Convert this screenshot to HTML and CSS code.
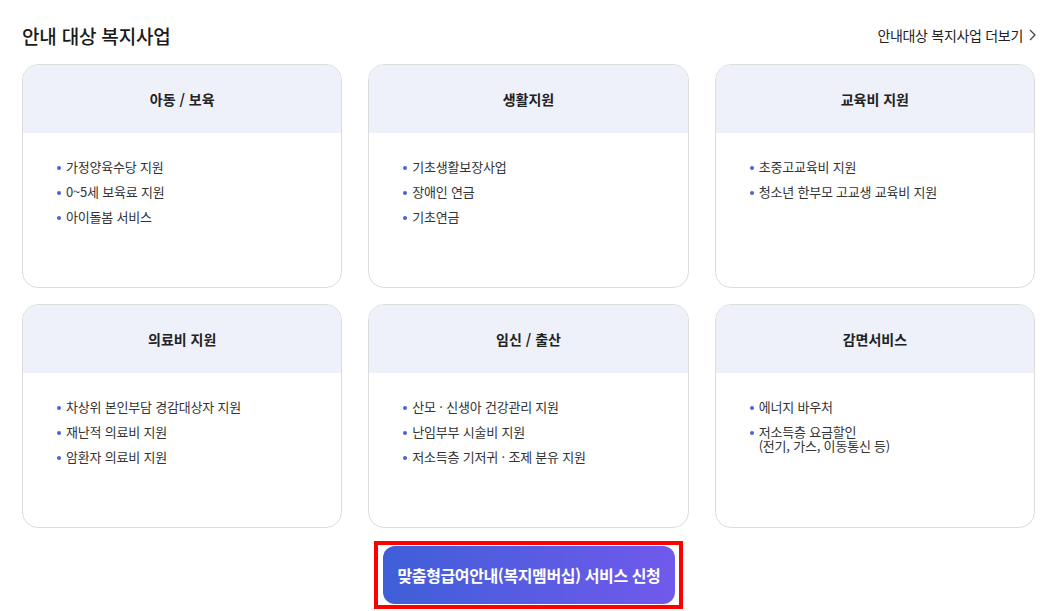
FILE: index.html
```html
<!DOCTYPE html>
<html lang="ko">
<head>
  <meta charset="UTF-8">
  <title>안내 대상 복지사업</title>
  <link rel="stylesheet" href="styles.css">
</head>
<body>
  <div class="wrap">
    <div class="top">
      <h2>안내 대상 복지사업</h2>
      <a class="more" href="#">안내대상 복지사업 더보기
        <svg class="arrow" width="7" height="12" viewBox="0 0 7 12"><path d="M1 1l5 5-5 5" fill="none" stroke="#444" stroke-width="1.3"/></svg>
      </a>
    </div>

    <div class="cards">
      <div class="card">
        <div class="card-head">아동 / 보육</div>
        <ul>
          <li>가정양육수당 지원</li>
          <li>0~5세 보육료 지원</li>
          <li>아이돌봄 서비스</li>
        </ul>
      </div>
      <div class="card">
        <div class="card-head">생활지원</div>
        <ul>
          <li>기초생활보장사업</li>
          <li>장애인 연금</li>
          <li>기초연금</li>
        </ul>
      </div>
      <div class="card">
        <div class="card-head">교육비 지원</div>
        <ul>
          <li>초중고교육비 지원</li>
          <li>청소년 한부모 고교생 교육비 지원</li>
        </ul>
      </div>
      <div class="card">
        <div class="card-head">의료비 지원</div>
        <ul>
          <li>차상위 본인부담 경감대상자 지원</li>
          <li>재난적 의료비 지원</li>
          <li>암환자 의료비 지원</li>
        </ul>
      </div>
      <div class="card">
        <div class="card-head">임신 / 출산</div>
        <ul>
          <li>산모 · 신생아 건강관리 지원</li>
          <li>난임부부 시술비 지원</li>
          <li>저소득층 기저귀 · 조제 분유 지원</li>
        </ul>
      </div>
      <div class="card">
        <div class="card-head">감면서비스</div>
        <ul>
          <li>에너지 바우처</li>
          <li>저소득층 요금할인<br>(전기, 가스, 이동통신 등)</li>
        </ul>
      </div>
    </div>

    <div class="btn-area">
      <div class="btn-frame">
        <button class="apply">맞춤형급여안내(복지멤버십) 서비스 신청</button>
      </div>
    </div>
  </div>
</body>
</html>
```

FILE: styles.css
```css
body {
  margin: 0;
  font-family: "Noto Sans CJK KR", "Noto Sans", sans-serif;
  color: #222;
  background: #fff;
}
.wrap {
  width: 1013px;
  margin-left: 22px;
  padding-top: 21px;
}
.top {
  display: flex;
  justify-content: space-between;
  align-items: center;
  height: 28px;
}
h2 {
  margin: 0;
  font-size: 19px;
  font-weight: 500;
  letter-spacing: -0.2px;
  color: #1a1a1a;
}
.more {
  display: flex;
  align-items: center;
  gap: 6px;
  margin-right: -1px;
  font-size: 14px;
  color: #222;
  text-decoration: none;
  letter-spacing: -0.3px;
}
.cards {
  display: grid;
  grid-template-columns: repeat(3, 1fr);
  column-gap: 26px;
  row-gap: 16px;
  margin-top: 15px;
}
.card {
  height: 222px;
  border: 1px solid #dcdcdc;
  border-radius: 16px;
  overflow: hidden;
}
.card-head {
  height: 68px;
  background: #eef1fa;
  display: flex;
  align-items: center;
  justify-content: center;
  font-size: 14px;
  font-weight: 700;
  color: #222;
}
.card ul {
  list-style: none;
  margin: 0;
  padding: 27px 0 0 43px;
}
.card li {
  position: relative;
  font-size: 13px;
  line-height: 14px;
  margin-bottom: 11px;
  color: #333;
  letter-spacing: -0.2px;
}
.card li::before {
  content: "";
  position: absolute;
  left: -9px;
  top: 6px;
  width: 4px;
  height: 4px;
  border-radius: 50%;
  background: #4b63d6;
}
.btn-area {
  display: flex;
  justify-content: center;
  margin-top: 13px;
}
.btn-frame {
  border: 4px solid #ff0000;
  padding: 1px 4px 1px 5px;
}
.apply {
  display: block;
  width: 292px;
  height: 58px;
  border: none;
  border-radius: 12px;
  background: linear-gradient(90deg, #3f5fd8, #7159ec);
  color: #fff;
  font-family: inherit;
  font-size: 16px;
  font-weight: 700;
  letter-spacing: -0.4px;
  cursor: pointer;
}
```
